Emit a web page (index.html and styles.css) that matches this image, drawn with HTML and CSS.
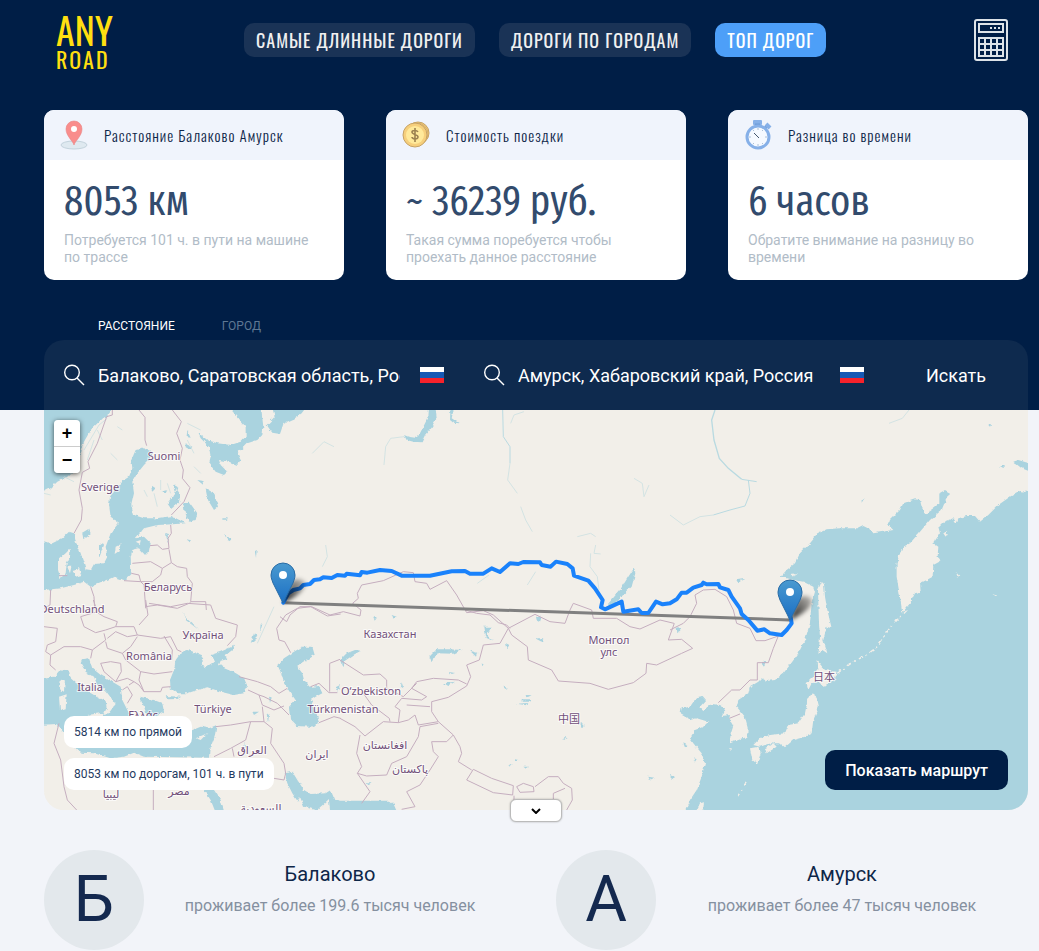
FILE: index.html
```html
<!DOCTYPE html>
<html lang="ru">
<head>
  <meta charset="UTF-8" />
  <meta name="viewport" content="width=device-width, initial-scale=1.0" />
  <title>Расстояние Балаково Амурск</title>
  <link rel="stylesheet" href="styles.css">
</head>
<body>
  <div class="top">
    <header class="header container">
      <a href="#" class="logo"><span class="logo-any">ANY</span><span class="logo-road">ROAD</span></a>
      <nav class="menu">
        <a href="#">САМЫЕ ДЛИННЫЕ ДОРОГИ</a>
        <a href="#">ДОРОГИ ПО ГОРОДАМ</a>
        <a href="#" class="active">ТОП ДОРОГ</a>
      </nav>
      <a href="#" class="calc" aria-label="Калькулятор">
        <svg width="34" height="42" viewBox="0 0 34 42" fill="none" stroke="#dde3e8" stroke-width="2">
          <rect x="1" y="1" width="32" height="40" rx="2" />
          <rect x="5" y="5" width="24" height="8" />
          <path d="M16 9h2M20 9h2M24 9h2" />
          <path d="M5 19h24v18H5zM5 25h24M5 31h24M11 19v18M17 19v18M23 19v18" />
        </svg>
      </a>
    </header>

    <section class="cards container">
      <article class="card">
        <h2 class="card-title">
          <svg width="30" height="30" viewBox="0 0 30 30">
            <ellipse cx="15" cy="25" rx="13" ry="4" fill="#dfe9f0" stroke="#c3d2dc" />
            <path d="M15 25c-1-4-8-9-8-16a8 8 0 0 1 16 0c0 7-7 12-8 16z" fill="#f98d8c" stroke="#e88485" stroke-width="0.6" />
            <circle cx="15" cy="9" r="3" fill="#fff" />
          </svg>
          Расстояние Балаково Амурск
        </h2>
        <div class="card-body">
          <p class="card-value">8053 км</p>
          <p class="card-text">Потребуется 101 ч. в пути на машине по трассе</p>
        </div>
      </article>
      <article class="card">
        <h2 class="card-title">
          <svg width="30" height="30" viewBox="0 0 30 30">
            <circle cx="17" cy="13" r="11" fill="#f4cc79" stroke="#c6a367" />
            <circle cx="16" cy="14" r="11" fill="#f4cc79" stroke="#d7b06a" />
            <circle cx="14" cy="15" r="12" fill="#f6cf7c" stroke="#c6a367" />
            <circle cx="14" cy="15" r="9" fill="#ffe99a" />
            <path d="M17 12c-1-2-6-2-6 0 0 3 6 2 6 5 0 3-6 2-6 0M14 8v14" fill="none" stroke="#9d8250" stroke-width="1.6" />
          </svg>
          Стоимость поездки
        </h2>
        <div class="card-body">
          <p class="card-value">~ 36239 руб.</p>
          <p class="card-text">Такая сумма поребуется чтобы проехать данное расстояние</p>
        </div>
      </article>
      <article class="card">
        <h2 class="card-title">
          <svg width="30" height="30" viewBox="0 0 30 30">
            <rect x="10" y="0" width="9" height="5" rx="1" fill="#86b0e8" />
            <path d="M22 8l3-3M12 5h5" stroke="#6d9bd8" stroke-width="3" />
            <path d="M23 4l4 4" stroke="#86b0e8" stroke-width="4" />
            <circle cx="15" cy="17" r="11" fill="#f5f9ff" stroke="#86b0e8" stroke-width="3" />
            <path d="M15 8v2M15 24v2M6 17h2M22 17h2M10 10l1 1M20 10l-1 1M10 24l1-1M20 24l-1-1" stroke="#9bb3cc" stroke-width="0.8" />
            <path d="M11 13l5 5" stroke="#44566c" />
          </svg>
          Разница во времени
        </h2>
        <div class="card-body">
          <p class="card-value">6 часов</p>
          <p class="card-text">Обратите внимание на разницу во времени</p>
        </div>
      </article>
    </section>

    <section class="container">
      <div class="tabs">
        <button type="button" class="tab active">РАССТОЯНИЕ</button>
        <button type="button" class="tab">ГОРОД</button>
      </div>
      <form class="search">
        <label class="field">
          <svg width="22" height="22" viewBox="0 0 22 22" fill="none" stroke="#fff" stroke-width="1.4"><circle cx="8" cy="8.500" r="7.300" /><path d="M13 14l7 7" /></svg>
          <input type="text" aria-label="Откуда" value="Балаково, Саратовская область, Россия">
          <svg class="flag" width="24" height="16" viewBox="0 0 24 16"><path fill="#fff" d="M0 0h24v5H0z" /><path fill="#1558b5" d="M0 5h24v6H0z" /><path fill="#f6222b" d="M0 11h24v5H0z" /></svg>
        </label>
        <label class="field">
          <svg width="22" height="22" viewBox="0 0 22 22" fill="none" stroke="#fff" stroke-width="1.4"><circle cx="8" cy="8.500" r="7.300" /><path d="M13 14l7 7" /></svg>
          <input type="text" aria-label="Куда" value="Амурск, Хабаровский край, Россия">
          <svg class="flag" width="24" height="16" viewBox="0 0 24 16"><path fill="#fff" d="M0 0h24v5H0z" /><path fill="#1558b5" d="M0 5h24v6H0z" /><path fill="#f6222b" d="M0 11h24v5H0z" /></svg>
        </label>
        <button type="submit" class="search-btn">Искать</button>
      </form>
    </section>
  </div>

  <main class="container">
    <div class="map">
      <svg class="map-canvas" viewBox="0 0 984 400" preserveAspectRatio="xMidYMid slice">
        <defs>
          <filter id="coast" x="0" y="0" width="100%" height="100%">
            <feTurbulence type="fractalNoise" baseFrequency="0.07" numOctaves="3" seed="4" />
            <feDisplacementMap in="SourceGraphic" scale="11" xChannelSelector="R" yChannelSelector="G" />
          </filter>
          <filter id="blur" x="-50%" y="-50%" width="200%" height="200%"><feGaussianBlur stdDeviation="2" /></filter>
          <linearGradient id="pinFill" x1="0" y1="0" x2="0" y2="1">
            <stop offset="0" stop-color="#4a9ad0" />
            <stop offset="1" stop-color="#1b6fc4" />
          </linearGradient>
          <linearGradient id="shade" x1="0" y1="1" x2="1" y2="0">
            <stop offset="0" stop-color="#000" stop-opacity="0.9" />
            <stop offset="1" stop-color="#000" stop-opacity="0.2" />
          </linearGradient>
          <g id="pin">
            <path d="M0 0L8 -22Q18 -27 22 -20Q22 -10 0 0z" fill="url(#shade)" filter="url(#blur)" />
            <path d="M0 0L-10 -20C-11 -23 -12 -25 -12 -28A12 12 0 0 1 12 -28C12 -25 11 -23 10 -20z" fill="url(#pinFill)" stroke="#2a6ca5" />
            <circle cx="0" cy="-28" r="4" fill="#fff" />
          </g>
        </defs>

        <g transform="scale(0.33333)">
          <!-- seas and lakes -->
          <rect width="2952" height="1200" fill="#f2efe9" />
          <g filter="url(#coast)">
            <rect width="2952" height="1200" fill="#f2efe9" />
            <g class="water">
              <path d="M-20 -20H215L190 15 165 35 140 60 120 95 110 120 100 170 70 200 40 215 20 235 -20 255z" />
              <path d="M-20 390L25 400 55 385 75 365 90 370 95 395 110 430 120 460 125 478 140 480 150 462 180 460 190 440 185 410 200 370 215 350 225 338 200 320 195 285 198 260 215 235 232 215 255 200 265 175 262 150 275 120 300 115 325 125 320 145 300 165 280 190 265 215 270 250 262 285 270 315 300 325 340 325 385 318 400 327 425 340 385 343 340 345 300 355 275 385 300 380 320 400 315 425 300 432 285 415 265 420 260 440 262 490 240 510 210 500 185 512 140 530 120 515 90 525 50 535 -20 542z" />
              <path d="M545 -20L580 20 605 50 605 80 590 95 560 105 520 100 490 90 462 68 470 85 495 110 500 140 495 160 515 185 540 195 550 185 530 165 525 150 555 155 580 165 590 150 580 130 610 100 640 90 655 75 658 50 650 -20z" />
              <path d="M682 -20L692 20 668 45 685 68 708 72 718 42 745 30 773 10 795 -20z" />
              <path d="M1156 -20L1153 20 1138 50 1128 70 1113 83 1093 80 1080 75 1088 90 1108 95 1133 97 1143 75 1163 50 1178 25 1173 -20z" />
              <path d="M1220 -20H1233L1223 25 1245 40 1228 38 1218 30z" />
              <path d="M418 280L435 275 460 310 455 330 435 335 422 305zM485 235L510 250 522 290 510 300 492 270zM370 280L400 240 410 255 405 275 380 295zM115 370L135 358 140 370 118 388zM366 370L375 372 371 400zM540 372L565 390 555 397zM537 325L548 325 546 334zM430 388L441 390 436 397zM460 210L475 212 478 225zM425 100L445 110 440 120 425 112zM430 60L440 80 428 78zM635 420L641 420 639 440z" />
              <path d="M165 400L180 405 165 445zM350 245L370 240 365 250zM320 225L335 235 325 245zM390 225L400 230 395 245z" />
              <path d="M1770 475L1774 490 1763 530 1738 555 1698 590 1692 582 1728 540 1753 500z" />
            </g>
            <g class="water" transform="translate(0 570)">
              <path d="M-20 240L30 230 50 208 75 212 80 235 110 262 150 285 185 303 188 325 178 345 192 342 215 312 185 272 160 255 150 230 125 215 110 190 115 178 135 175 145 205 170 225 205 245 230 260 235 300 250 330 262 355 300 390 440 392 470 380 495 385 518 375 512 410 500 440 498 473 300 470 270 458 240 470 200 475 150 460 110 458 90 440 40 372 -20 375z" />
              <path d="M378 240L390 210 395 180 410 160 430 150 445 155 470 165 480 180 470 195 485 202 510 185 500 165 530 155 570 137 565 150 545 165 550 178 530 182 525 195 560 210 600 235 612 262 600 280 570 285 530 275 490 262 460 270 430 280 400 280 380 265z" />
              <path d="M288 290L330 300 355 310 360 335 340 348 310 348 300 320zM365 288L412 290 400 297 375 298z" />
              <path d="M700 195L720 175 750 155 775 140 805 140 812 165 790 180 760 200 775 220 780 240 800 260 825 258 835 280 815 290 800 300 815 330 825 370 800 380 760 378 738 355 735 320 755 300 740 280 720 250 712 220z" />
              <path d="M480 570H510L530 600 545 650H520L500 600z" />
              <path d="M722 520L745 515 760 540 780 570 800 582 845 580 860 570 870 595 888 602 1035 602 1050 615 1065 650H860L855 600 820 632 780 620 768 590 762 605 745 580 730 550z" />
              <path d="M418 30L422 50 465 90 425 60zM630 100L640 110 620 130zM650 70L655 72 648 100zM675 290L683 292 678 305zM668 340L675 345 672 370zM625 335L645 335 630 345zM875 262L888 255 880 272zM893 185L900 183 900 200zM600 430L612 437 605 440z" />
            </g>
            <g class="water" transform="translate(888 600)">
              <path d="M0 150L20 130 45 120 62 122 40 135 15 152 8 172zM268 140L290 118 330 118 365 120 340 131 290 130 282 147 278 160zM312 220L345 215 325 228zM390 122L412 128 408 140zM430 50L455 50 440 75 458 92 435 82zM498 100L508 105 502 115zM588 20L605 20 600 35 590 30zM585 85L610 85 605 95zM328 186L345 189 335 192zM545 268L578 268 570 275 545 275zM560 255L575 256 562 262zM530 281L565 279 560 286zM718 335L735 345 725 352zM425 160L432 165 427 168zM490 230L504 233 496 237zM550 470L568 470 558 476zM525 447L538 450 530 456zM990 490L1005 505 995 510zM925 500L943 503 930 510zM1030 400L1040 405 1036 415zM670 385L683 385 675 390zM505 462L515 463 510 467zM1010 50L1022 60 1012 70zM80 520L95 520 85 526zM185 220L190 235 183 230zM155 15L170 20 160 28zM100 20L110 25 104 32z" />
            </g>
            <g class="water" transform="translate(1878 0)">
              <path d="M1094 248L1050 243 1020 260 985 285 955 315 930 335 915 318 890 318 865 325 860 340 850 325 820 335 805 350 810 370 790 400 805 410 803 440 808 455 790 465 788 500 770 510 750 520 752 545 735 550 720 580 697 608 690 560 680 500 680 460 690 430 700 410 720 400 750 365 780 330 815 300 825 275 840 248 825 240 808 250 808 280 790 295 765 312 755 290 750 270 735 268 700 280 690 300 660 330 655 345 670 360 640 365 610 370 600 355 580 345 560 355 510 355 470 358 445 370 420 400 390 430 375 460 350 480 332 500 360 508 400 515 430 530 435 545 425 580 420 640 405 690 385 730 360 765 340 790 315 810 290 813 275 805 265 815 240 830 235 850 205 870 200 890 225 920 233 950 232 980 205 990 180 1000 182 970 190 945 178 925 180 915 155 918 165 895 150 885 125 882 100 900 90 890 108 870 98 858 80 862 60 890 35 895 32 910 50 920 60 930 80 925 115 935 100 950 75 960 60 985 70 1000 95 1030 105 1060 95 1100 80 1140 60 1170 38 1220H1100z" />
              <path d="M1030 155L1045 150 1094 165V190L1055 175zM990 168L1005 168 1000 174zM198 508L222 504 205 520zM275 755L288 757 280 770zM955 42L963 42 960 47zM0 1100L12 1100 8 1110zM575 270L585 262 575 278zM70 1045L80 1047 75 1055z" />
            </g>
            <!-- islands -->
            <g class="land">
              <path d="M42 450L65 430 80 415 78 440 68 460 65 490 50 505 42 480zM85 480L105 475 112 495 95 500zM215 410L230 403 222 425 212 432zM275 395L290 390 288 402zM70 470L82 470 78 490z" />
              <path d="M50 810L63 808 60 845 48 838zM45 860L68 853 65 895 48 900zM130 915L180 908 172 925zM455 985L490 970 470 990z" />
              <path d="M2322 540L2333 515 2340 522 2343 560 2350 600 2363 655 2348 650 2338 690 2350 730 2335 720 2323 735 2328 680 2325 640z" />
              <path d="M2318 750L2343 780 2378 785 2368 810 2343 830 2323 815 2303 820 2293 840 2288 820 2308 800 2320 780z" />
              <path d="M2303 850L2318 860 2325 890 2308 930 2303 970 2283 980 2248 990 2223 1012 2208 1000 2178 1000 2148 1010 2128 1005 2148 985 2178 975 2223 970 2233 945 2263 940 2283 910 2290 875z" />
              <path d="M2118 1015L2143 1010 2150 1030 2140 1062 2125 1050zM2163 1015L2188 1000 2198 1010 2168 1030zM1958 1200L1968 1180 1980 1177 1978 1202zM2698 370L2712 362 2705 380zM2735 485L2748 500 2740 498zM2240 492L2258 490 2250 503zM2055 1015L2068 1015 2060 1020zM2845 552L2860 556 2855 558z" />
            </g>
            <path class="islets" d="M2380 790L2428 755 2468 735 2500 710 2540 650 2590 600M2552 632L2570 618M2080 1160L2110 1115" />
          </g>

          <!-- rivers -->
          <g class="river">
            <path d="M2013 0L2003 30 2010 90 2026 145 2053 175 2093 208" stroke-width="4" />
            <path d="M2093 208L2138 215M2113 210L2118 250 2103 288 2058 300 2008 315M1376 0L1378 80 1398 110 1398 160" />
            <path class="faint" d="M2008 315L1968 320 1918 345 1878 315M1398 160L1391 210 1420 250M1430 290L1445 330 1465 365M1080 80L1040 85 1025 110 1020 165M1400 40L1410 15 1440 5M1600 380L1640 370 1655 380M1640 430L1638 470 1660 500 1665 540M1655 405L1650 430 1670 432M1770 205L1795 220 1800 260 1815 225M1300 520L1335 495M1450 525L1475 485M835 470L850 440 845 405M640 700L690 590M2535 40L2575 25 2595 0M805 130L840 95 870 110" />
            <path class="faint" d="M120 120L165 45 190 25M150 90L130 150M60 200L90 215M0 250L20 255M330 250L340 290M350 210L350 240M370 220L380 250M300 240L310 260M430 40L470 60M430 90L450 130M450 170L470 190M220 50L235 60M160 60L175 90M200 130L220 150" />
          </g>

          <!-- borders -->
          <g class="border">
            <path d="M205 0V15L188 20 160 100 132 155 137 175 115 187 105 240 115 295 112 330 90 370M285 0L303 22V90L308 107M385 0L412 35 398 70 415 115 408 150 418 180 415 205 438 233 420 275 382 315M380 345L382 370 372 385 375 415 355 418 340 405 318 407M375 418L382 458 355 475 320 455 265 460M262 490L285 495 290 515 240 512M355 475L350 495 325 515 290 515 300 525 305 595M382 458L400 470 428 475 430 500 445 520 440 575 485 575 487 600M305 590L340 585 400 595 440 578M20 540L18 585 0 595M140 530L150 560 152 598M45 497H70" />
            <g transform="translate(0 570)">
              <path d="M148 0L155 20 160 35 110 50 120 80 155 98 185 90 215 80 220 65 180 50 160 38M0 80L40 85 35 125 10 135 5 155 20 165 60 140 110 140 145 150 185 120 180 100M215 80L270 80 280 105 250 110 215 95 190 115M305 0L312 45 285 75M315 10L380 20 430 10 500 15 515 55 580 75 575 110 550 137M280 105L350 115 380 110 400 150 412 155M360 108L385 150 383 180M185 125L190 145 235 160 260 140 280 110M145 150L140 175" />
              <path d="M170 190L200 185 230 190 232 215 215 245 180 215 170 190M235 160L245 180 290 215 330 222 385 215M290 215L285 240 300 275 350 275 355 262 380 260M215 245L250 235 270 245 285 255 300 275M235 270L250 260 265 285 250 310M270 245L255 255M20 165L18 195 35 210M585 230L640 245 680 260 705 280 730 265M612 270L645 285 660 290 700 310 735 345M645 285L655 315 690 330 720 318" />
              <path d="M515 380L560 375 620 365 660 365 655 320M660 365L685 385 680 430 720 490 725 520M620 365L605 420 560 445 510 470M565 445L570 470M690 535L720 540 725 520M45 370L30 430 50 480 60 560 70 600 98 630M328 570V630M740 158L722 125 705 120 698 85 725 45 760 25 800 20 850 48 890 42M800 260L825 250 855 278 880 278M857 275V190L888 178M825 368L870 350 890 355" />
            </g>
            <path d="M708 620L728 635 738 615 768 590 803 590 858 615 898 605 948 618 951 600 926 580 943 565 940 550 953 525 1018 512 1078 485 1108 488 1113 515 1148 520 1158 538 1208 512 1238 555 1268 608 1318 602 1348 615 1393 655 1473 613 1518 635 1563 640 1578 600 1588 580 1643 600 1648 625 1718 625 1758 650 1788 657 1848 630 1890 640" />
            <g transform="translate(888 600)">
              <path d="M375 0L410 10 450 15 475 38 500 45 510 55M1003 40L985 90 1025 88 1058 115 1025 130 950 165 920 160 918 190 880 218 805 238 750 220 655 213 635 180 565 150 562 110 515 75 505 55 480 100 430 105 418 150 380 165 392 200 380 228 325 262 275 275 275 305 295 335 340 375M380 222L355 210 280 205 230 215 215 235 260 260 245 270 185 265 165 290 180 300 175 338 205 330 225 315 235 345 295 335M200 285L270 290M0 150L70 195 120 192 140 210 140 235 190 260 230 220" />
              <path d="M0 325L45 350 75 378 130 335 175 338M70 250L95 285 148 325 150 335M60 375L50 430 65 470 52 490 90 545 65 580M52 490L80 498 140 495 155 460 200 440 235 380 240 350 295 340M340 375L320 395 275 395 280 425 295 440 270 480 240 525 200 545 225 590 185 598M340 375L360 410 365 430 355 455 395 480M400 478L455 505 520 527 518 555 460 548 380 510zM530 530L550 520 580 530 582 545 540 547zM585 530L625 500 655 500 670 520 695 535 697 570 680 600M640 600V550L675 535M522 557V600" />
            </g>
            <path d="M1878 660L1918 640 1938 620 1958 580 1953 555 1978 540 2013 538 2048 560 2068 600 2078 640 2118 655 2136 692 2163 692 2203 678 2188 715 2173 758 2140 758 2140 810 2118 810 2088 840 2063 840 2023 878M2056 925L2088 912" />
          </g>

          <path class="straight" d="M718 578L2238 630" />
          <path class="route" d="M718 578L733 550 748 540 768 535 778 525 798 522 810 510 828 508 838 502 863 504 880 495 903 497 908 491 948 496 953 486 970 488 1008 480 1043 483 1073 497 1158 497 1223 484 1263 483 1278 491 1318 491 1343 475 1368 486 1398 460 1423 462 1438 456 1488 457 1493 465 1520 470 1536 455 1570 462 1586 475 1590 497 1633 512 1653 535 1676 570 1671 592 1683 598 1733 575 1738 605 1783 598 1793 609 1813 609 1836 575 1856 583 1878 580 1898 568 1913 548 1928 548 1948 533 1973 525 1978 518 1988 523 2023 522 2028 532 2053 540 2063 560 2088 595 2093 612 2113 630 2140 662 2161 658 2178 670 2213 675 2228 660 2243 640 2240 622" />
        </g>

        <g class="labels">
          <text x="120" y="50">Suomi</text>
          <text x="56" y="81">Sverige</text>
          <text x="124" y="181">Беларусь</text>
          <text x="28" y="203">Deutschland</text>
          <text x="159" y="229">Україна</text>
          <text x="105" y="250">România</text>
          <text x="46" y="281">Italia</text>
          <text x="169" y="303">Türkiye</text>
          <text x="99" y="309">Ελλάς</text>
          <text x="346" y="228">Казахстан</text>
          <text x="327" y="285">O‘zbekiston</text>
          <text x="299" y="303">Türkmenistan</text>
          <text x="208" y="344">العراق</text>
          <text x="273" y="348">ایران</text>
          <text x="341" y="339">افغانستان</text>
          <text x="366" y="363">پاکستان</text>
          <text x="67" y="388">ليبيا</text>
          <text x="135" y="385">مصر</text>
          <text x="217" y="402">السعودية</text>
          <text x="565" y="234">Монгол</text>
          <text x="565" y="246">улс</text>
          <text x="525" y="313">中国</text>
          <text x="780" y="271">日本</text>
        </g>

        <use href="#pin" x="239" y="193" />
        <use href="#pin" x="746" y="210" />
      </svg>

      <div class="zoom">
        <button type="button" aria-label="Приблизить">+</button>
        <button type="button" aria-label="Отдалить">−</button>
      </div>
      <div class="distances">
        <span>5814 км по прямой</span>
        <span>8053 км по дорогам, 101 ч. в пути</span>
      </div>
      <button type="button" class="route-btn">Показать маршрут</button>
      <button type="button" class="expand" aria-label="Развернуть карту">
        <svg width="10" height="6" viewBox="0 0 10 6" fill="none" stroke="#000" stroke-width="2"><path d="M1 1l4 4 4-4" /></svg>
      </button>
    </div>

    <section class="cities">
      <div class="city">
        <div class="city-letter">Б</div>
        <div class="city-info">
          <h3>Балаково</h3>
          <p>проживает более 199.6 тысяч человек</p>
        </div>
      </div>
      <div class="city">
        <div class="city-letter">А</div>
        <div class="city-info">
          <h3>Амурск</h3>
          <p>проживает более 47 тысяч человек</p>
        </div>
      </div>
    </section>
  </main>
</body>
</html>
```

FILE: styles.css
```css
* {
  box-sizing: border-box;
}

body {
  margin: 0;
  font-family: Roboto, sans-serif;
  background-color: #f2f4f9;
  color: #0e2648;
}

h2,
h3,
p {
  margin: 0;
  font-weight: 400;
}

button,
input {
  font-family: inherit;
  border: none;
  padding: 0;
}

button {
  cursor: pointer;
}

svg {
  display: block;
}

.container {
  padding: 0 11px 0 44px;
}

.top {
  background-color: #001e46;
}

/* header */
.header {
  display: flex;
  align-items: center;
  height: 80px;
}

.logo {
  display: flex;
  flex-direction: column;
  width: 200px;
  padding-left: 12px;
  color: #ffdf10;
  text-decoration: none;
  font-family: Oswald, sans-serif;
}

.logo-any {
  font-size: 38px;
  line-height: 38px;
}

.logo-road {
  font-size: 22px;
  line-height: 22px;
  letter-spacing: 2px;
}

.menu {
  display: flex;
  gap: 24px;
}

.menu a {
  padding: 0 12px;
  border-radius: 10px;
  background-color: #1a3356;
  color: #f0f0f0;
  font-family: Oswald, sans-serif;
  font-size: 18px;
  line-height: 34px;
  letter-spacing: 1px;
  text-decoration: none;
  white-space: nowrap;
}

.menu .active {
  background-color: #4d9ff8;
  color: #fff;
}

.calc {
  margin-left: auto;
  margin-right: 20px;
}

/* cards */
.cards {
  display: grid;
  grid-template-columns: repeat(3, 1fr);
  gap: 42px;
  padding-top: 30px;
}

.card {
  border-radius: 10px;
  overflow: hidden;
  background-color: #fff;
}

.card-title {
  display: flex;
  align-items: center;
  gap: 15px;
  height: 50px;
  padding: 0 15px;
  background-color: #f0f4fc;
  font-family: Oswald, sans-serif;
  font-size: 15px;
  font-weight: 300;
  letter-spacing: 1px;
}

.card-body {
  padding: 16px 20px 14px;
}

.card-value {
  margin-bottom: 6px;
  color: #324b6d;
  font-family: "Fira Sans Extra Condensed", "Fira Sans Condensed", sans-serif;
  font-size: 42px;
  line-height: 50px;
}

.card-text {
  color: #b1bcc7;
  font-size: 14px;
  line-height: 17px;
}

/* search */
.tabs {
  display: flex;
  gap: 47px;
  padding: 38px 54px 6px;
}

.tab {
  background: none;
  color: #5f7893;
  font-size: 12px;
  line-height: 16px;
}

.tab.active {
  color: #fff;
}

.search {
  display: grid;
  grid-template-columns: 35fr 35fr 12fr;
  height: 70px;
  border-radius: 20px 20px 0 0;
  background-color: #0e2a4e;
}

.field {
  display: flex;
  align-items: center;
  padding: 0 20px;
}

.field input {
  flex: 1;
  min-width: 0;
  height: 22px;
  margin: 0 20px 0 12px;
  background: none;
  color: #fff;
  font-size: 18px;
  outline: none;
}

.search-btn {
  background: none;
  color: #fff;
  font-size: 18px;
}

/* map */
.map {
  position: relative;
  height: 400px;
}

.map-canvas {
  width: 100%;
  height: 100%;
  border-radius: 0 0 20px 20px;
}

.water {
  fill: #aad3df;
}

.land {
  fill: #f2efe9;
}

.islets {
  fill: none;
  stroke: #f2efe9;
  stroke-width: 4;
  stroke-dasharray: 14 8 5 12;
}

.river {
  fill: none;
  stroke: #b9dae1;
  stroke-width: 3;
}

.faint {
  stroke: #d3e3e3;
}

.border {
  fill: none;
  stroke: #c5aebf;
  stroke-width: 3;
  stroke-linejoin: round;
}

.straight {
  stroke: #808080;
  stroke-width: 9;
}

.route {
  fill: none;
  stroke: #1a82fb;
  stroke-width: 12;
  stroke-linejoin: round;
  stroke-linecap: round;
}

.labels {
  fill: #72507a;
  stroke: #fff;
  stroke-width: 2px;
  stroke-opacity: 0.7;
  paint-order: stroke;
  font-family: "Noto Sans", "DejaVu Sans", "Noto Sans CJK SC", sans-serif;
  font-size: 11px;
  text-anchor: middle;
}

.zoom {
  position: absolute;
  left: 10px;
  top: 10px;
  width: 26px;
  border-radius: 4px;
  overflow: hidden;
  box-shadow: 0 1px 5px rgba(0, 0, 0, 0.65);
}

.zoom button {
  display: block;
  width: 26px;
  height: 26px;
  background-color: #fff;
  color: #000;
  font: bold 18px/26px "Liberation Sans", sans-serif;
}

.zoom button:first-child {
  height: 27px;
  border-bottom: 1px solid #ccc;
}

.distances {
  position: absolute;
  left: 20px;
  bottom: 20px;
  display: flex;
  flex-direction: column;
  align-items: flex-start;
  gap: 10px;
}

.distances span {
  padding: 0 10px;
  border-radius: 10px;
  background-color: #fff;
  color: #1f3a5f;
  font-size: 12px;
  line-height: 32px;
}

.route-btn {
  position: absolute;
  right: 20px;
  bottom: 20px;
  height: 40px;
  padding: 0 20px;
  border-radius: 10px;
  background-color: #001e46;
  color: #fff;
  font-size: 16px;
  font-weight: 500;
}

.expand {
  position: absolute;
  left: 50%;
  bottom: -12px;
  display: flex;
  align-items: center;
  justify-content: center;
  width: 52px;
  height: 23px;
  margin-left: -26px;
  border: 1px solid #bbb;
  border-radius: 6px;
  background-color: #fff;
  box-shadow: 0 0 2px rgba(0, 0, 0, 0.3);
}

/* cities */
.cities {
  display: grid;
  grid-template-columns: 1fr 1fr;
  gap: 40px;
  padding-top: 40px;
}

.city {
  display: flex;
}

.city-letter {
  width: 100px;
  height: 100px;
  border-radius: 50%;
  background-color: #e3e8ec;
  color: #14294f;
  font-size: 64px;
  line-height: 100px;
  text-align: center;
}

.city-info {
  flex: 1;
  padding-top: 10px;
  text-align: center;
}

.city-info h3 {
  font-size: 20px;
  line-height: 28px;
}

.city-info p {
  margin-top: 8px;
  color: #8590a0;
  font-size: 16px;
  line-height: 20px;
}
```
